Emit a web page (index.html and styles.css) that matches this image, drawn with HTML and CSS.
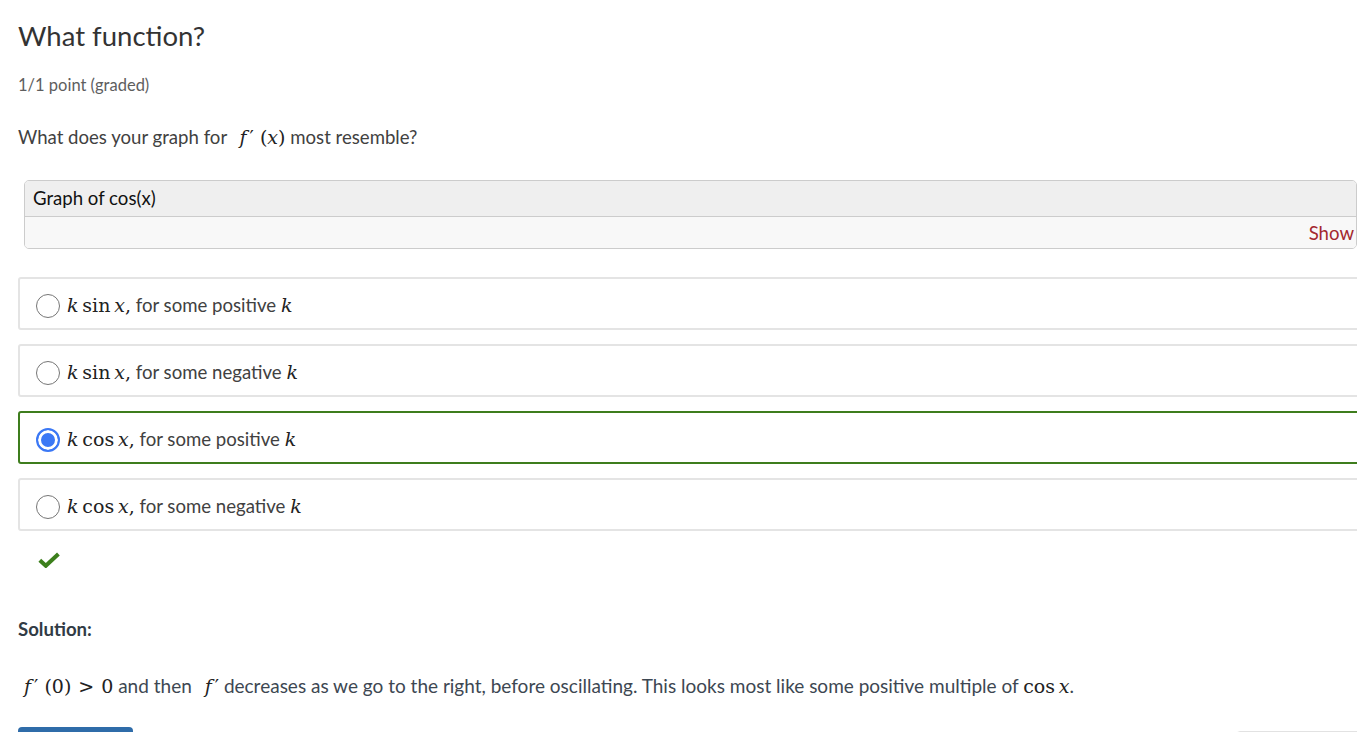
FILE: index.html
```html
<!DOCTYPE html>
<html>
<head>
<meta charset="utf-8">
<link rel="stylesheet" href="styles.css">
</head>
<body>
<div class="page">
  <h1 class="title">What function?</h1>
  <div class="points">1/1 point (graded)</div>
  <p class="question">What does your graph for <span class="math gap"><i>f</i><span class="prime">′</span><span class="sp">(<i>x</i>)</span></span> most resemble?</p>

  <div class="graph">
    <div class="graph-head">Graph of cos(x)</div>
    <div class="graph-body"><span class="show">Show</span></div>
  </div>

  <div class="options">
    <label class="option"><span class="radio"></span><span class="opt-text"><span class="math"><i>k</i>&#8201;sin&#8201;<i>x</i>,</span> for some positive <span class="math"><i>k</i></span></span></label>
    <label class="option"><span class="radio"></span><span class="opt-text"><span class="math"><i>k</i>&#8201;sin&#8201;<i>x</i>,</span> for some negative <span class="math"><i>k</i></span></span></label>
    <label class="option correct"><span class="radio checked"></span><span class="opt-text"><span class="math"><i>k</i>&#8201;cos&#8201;<i>x</i>,</span> for some positive <span class="math"><i>k</i></span></span></label>
    <label class="option"><span class="radio"></span><span class="opt-text"><span class="math"><i>k</i>&#8201;cos&#8201;<i>x</i>,</span> for some negative <span class="math"><i>k</i></span></span></label>
  </div>

  <div class="status">
    <svg width="22" height="16" viewBox="0 0 22 16"><path d="M1.8 8.2 L7.8 13.8 L20.4 2" fill="none" stroke="#3c7f1c" stroke-width="4" stroke-linejoin="miter"/></svg>
  </div>

  <div class="solution-label">Solution:</div>
  <p class="solution"><span class="math"><i>f</i><span class="prime">′</span><span class="sp">(0)</span><span class="rel">&gt;</span>0</span> and then <span class="math gap"><i>f</i><span class="prime">′</span></span> decreases as we go to the right, before oscillating. This looks most like some positive multiple of <span class="math">cos&#8201;<i>x</i></span>.</p>

  <div class="actions">
    <div class="btn-primary"></div>
    <div class="btn-secondary"></div>
  </div>
</div>
</body>
</html>
```

FILE: styles.css
```css
html, body {
  margin: 0;
  padding: 0;
  background: #fff;
  overflow: hidden;
  height: 732px;
}
.page {
  padding: 18px 0 0 18px;
  font-family: "Lato", "Open Sans", sans-serif;
  width: 1420px;
}
.title {
  margin: 0;
  font-size: 27.5px;
  line-height: 36px;
  font-weight: 400;
  color: #333;
}
.points {
  margin-top: 21px;
  font-size: 16.5px;
  line-height: 20px;
  color: #5e5e5e;
}
.question {
  margin: 30px 0 0;
  font-size: 18.6px;
  line-height: 24px;
  color: #414141;
}
.math {
  font-family: "DejaVu Serif", "Liberation Serif", serif;
  font-size: 19px;
  color: #222;
}
.math i { font-style: italic; }
.prime { margin-left: 3px; }
.sp { margin-left: 6px; }
.rel { margin: 0 7px; }
.gap { margin-left: 8px; }
.graph {
  margin: 31px 0 0 6px;
  width: 1331px;
  border: 1px solid #cccccc;
  border-radius: 5px;
  overflow: hidden;
}
.graph-head {
  height: 35px;
  background: #efefef;
  border-bottom: 1px solid #cccccc;
  padding-left: 8px;
  font-size: 18.6px;
  line-height: 35px;
  color: #111;
}
.graph-body {
  height: 31px;
  background: #f8f8f8;
  display: flex;
  justify-content: flex-end;
  align-items: center;
  padding-right: 2px;
}
.show {
  color: #a3282e;
  font-size: 18.6px;
  line-height: 31px;
  padding-top: 1px;
}
.options {
  margin-top: 28px;
  display: flex;
  flex-direction: column;
  gap: 14px;
}
.option {
  display: flex;
  align-items: center;
  height: 45px;
  width: 1400px;
  border: 2px solid #e4e4e4;
  border-radius: 3px;
  padding-left: 16px;
  padding-top: 4px;
  box-sizing: content-box;
  color: #414141;
  font-size: 18.6px;
}
.option.correct { border-color: #3e7d1d; }
.radio {
  width: 22px;
  height: 22px;
  border: 1px solid #767676;
  border-radius: 50%;
  background: #fff;
  flex: 0 0 auto;
  margin-right: 7px;
  box-sizing: content-box;
}
.radio.checked {
  width: 20px;
  height: 20px;
  border: 2px solid #3b78f5;
  background: #3b78f5;
  box-shadow: inset 0 0 0 3px #fff;
}
.opt-text { line-height: 24px; margin-top: -2px; }
.status {
  margin: 21px 0 0 20px;
  height: 16px;
}
.status svg { display: block; }
.solution-label {
  margin-top: 49px;
  font-size: 18.6px;
  line-height: 24px;
  font-weight: 700;
  color: #313b45;
}
.solution {
  margin: 33px 0 0 6px;
  font-size: 19px;
  line-height: 24px;
  color: #3d4752;
}
.actions {
  margin-top: 29px;
  display: flex;
  align-items: flex-start;
}
.btn-primary {
  width: 115px;
  height: 40px;
  background: #2f6ca9;
  border-radius: 4px;
}
.btn-secondary {
  margin-left: 1103px;
  margin-top: 4px;
  width: 130px;
  height: 40px;
  border: 1px solid #e2e2e2;
  border-radius: 4px;
}
```
